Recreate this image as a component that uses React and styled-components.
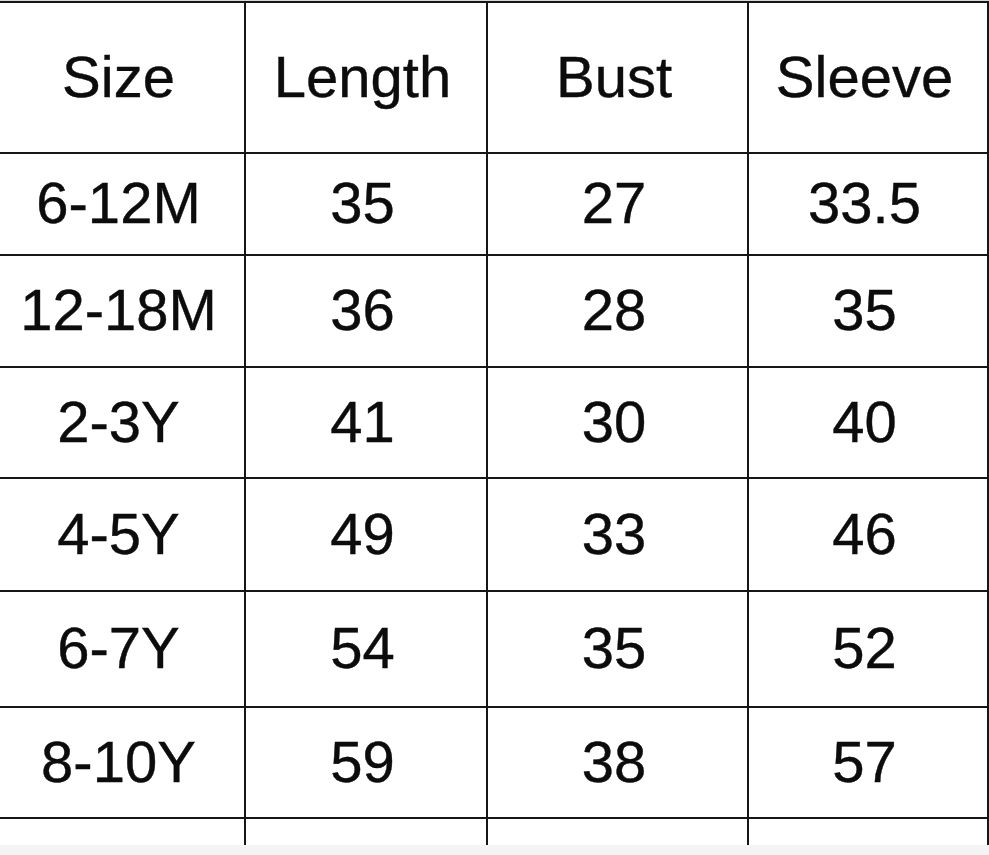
import React from "react";
import styled, { createGlobalStyle } from "styled-components";

const GlobalStyle = createGlobalStyle`
  html, body {
    margin: 0;
    padding: 0;
    background: #f4f4f4;
  }
`;

const headers = ["Size", "Length", "Bust", "Sleeve"];

const rows = [
  ["6-12M", "35", "27", "33.5"],
  ["12-18M", "36", "28", "35"],
  ["2-3Y", "41", "30", "40"],
  ["4-5Y", "49", "33", "46"],
  ["6-7Y", "54", "35", "52"],
  ["8-10Y", "59", "38", "57"],
  ["", "", "", ""],
];

const Sheet = styled.div`
  width: 989px;
  height: 845px;
  overflow: hidden;
  background: #ffffff;
  border-top: 1px solid #d8d8d8;
  box-sizing: border-box;
`;

const Chart = styled.div`
  display: grid;
  grid-template-columns: 246px 242px 261px 240px;
  grid-template-rows: 151px 102px 112px 111px 113px 116px 111px 60px;
  border-top: 2px solid #161616;
`;

const Cell = styled.div`
  display: flex;
  align-items: center;
  justify-content: center;
  padding-right: 7px;
  padding-bottom: 2px;
  box-sizing: border-box;
  border-right: 2px solid #161616;
  border-bottom: ${(p) => (p.$open ? "none" : "2px solid #161616")};
  font-family: "Liberation Sans", Arial, sans-serif;
  font-size: 58px;
  color: #0c0c0c;
  -webkit-text-stroke: 0.4px #0c0c0c;
  line-height: 1;
  white-space: nowrap;
`;

export default function App() {
  return (
    <>
      <GlobalStyle />
      <Sheet>
        <Chart>
          {headers.map((h) => (
            <Cell key={h}>{h}</Cell>
          ))}
          {rows.map((r, i) =>
            r.map((v, j) => (
              <Cell key={`${i}-${j}`} $open={i === rows.length - 1}>
                {v}
              </Cell>
            ))
          )}
        </Chart>
      </Sheet>
    </>
  );
}
